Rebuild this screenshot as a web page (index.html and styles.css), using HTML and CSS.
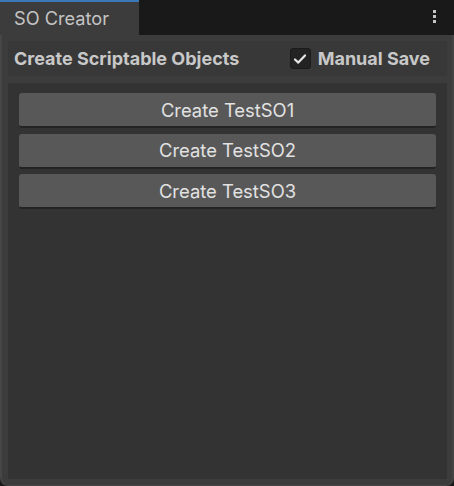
FILE: index.html
```html
<!DOCTYPE html>
<html>
<head>
<meta charset="utf-8">
<link rel="stylesheet" href="styles.css">
</head>
<body>
<div class="window">
  <div class="tabbar">
    <div class="tab">SO Creator</div>
    <div class="tabfill">
      <div class="kebab"><span></span><span></span><span></span></div>
    </div>
  </div>
  <div class="frame">
    <div class="header">
      <div class="title">Create Scriptable Objects</div>
      <label class="toggle">
        <span class="check">
          <svg width="14" height="12" viewBox="0 0 14 12"><path d="M2 6.5 L5.3 9.6 L12 2.4" fill="none" stroke="#e6e6e6" stroke-width="2.2" stroke-linecap="round" stroke-linejoin="round"/></svg>
        </span>
        <span class="label">Manual Save</span>
      </label>
    </div>
    <div class="panel">
      <button class="btn">Create TestSO1</button>
      <button class="btn">Create TestSO2</button>
      <button class="btn">Create TestSO3</button>
    </div>
  </div>
</div>
</body>
</html>
```
FILE: styles.css
```css
* { box-sizing: border-box; }
html, body { margin: 0; padding: 0; background: #191919; }
body { font-family: Inter, "Noto Sans", "Liberation Sans", sans-serif; }
.window { width: 454px; height: 486px; display: flex; flex-direction: column; }
.tabbar { height: 35px; display: flex; }
.tab {
  width: 139px; background: #3c3c3c; border-top: 2px solid #3a78b8;
  color: #c4c4c4; font-size: 18.2px; padding: 4px 0 0 14px; line-height: 24px;
}
.tabfill { flex: 1; background: #191919; display: flex; justify-content: flex-end; }
.kebab { width: 14px; margin-right: 13px; padding-top: 10px; display: flex; flex-direction: column; align-items: center; gap: 2px; }
.kebab span { width: 3px; height: 3px; background: #c4c4c4; display: block; }
.frame {
  flex: 1; background: #3c3c3c; display: flex; flex-direction: column;
  border-left: 2px solid #464646; border-right: 2px solid #444; border-bottom: 1px solid #464646;
  border-radius: 0 0 8px 8px; padding: 6px 5px 6px 6px; gap: 7px;
}
.header {
  height: 35px; background: #383838; display: flex; align-items: center;
  justify-content: space-between; padding: 0 17px 0 6px;
}
.title { color: #c8c8c8; font-size: 18px; font-weight: 700; letter-spacing: 0; }
.toggle { display: flex; align-items: center; gap: 7px; }
.check {
  width: 21px; height: 21px; background: #232323; border: 1px solid #1b1b1b; border-radius: 3px;
  display: flex; align-items: center; justify-content: center;
}
.label { color: #c8c8c8; font-size: 18px; font-weight: 700; }
.panel { flex: 1; background: #333333; padding: 10px 11px; display: flex; flex-direction: column; gap: 5.5px; }
.btn {
  height: 35px; background: #585858; border: none; border-bottom: 2px solid #232323;
  border-radius: 3px; color: #e2e2e2; font-family: inherit; font-size: 18.4px; padding: 0;
}
```
